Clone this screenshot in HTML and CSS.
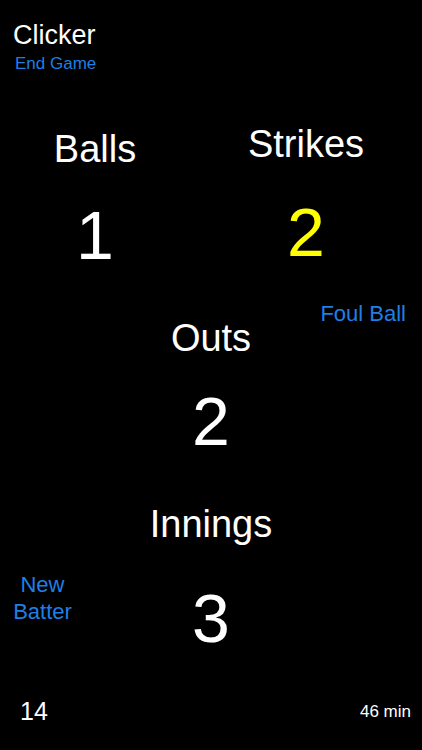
FILE: index.html
```html
<!DOCTYPE html>
<html lang="en">
<head>
<meta charset="utf-8">
<title>Clicker</title>
<link rel="stylesheet" href="styles.css">
</head>
<body>
<div class="screen">
  <header class="header">
    <div class="title">Clicker</div>
    <div class="link end-game">End Game</div>
  </header>

  <section class="count-row">
    <div class="count balls">
      <div class="label">Balls</div>
      <div class="number">1</div>
    </div>
    <div class="count strikes">
      <div class="label">Strikes</div>
      <div class="number yellow">2</div>
    </div>
  </section>

  <section class="outs">
    <div class="center-col outs-col">
      <div class="label">Outs</div>
      <div class="number outs-number">2</div>
    </div>
    <div class="link foul">Foul Ball</div>
  </section>

  <section class="innings">
    <div class="label innings-label">Innings</div>
    <div class="innings-row">
      <div class="link new-batter">New<br>Batter</div>
      <div class="number innings-number">3</div>
    </div>
  </section>

  <footer class="footer">
    <div class="batters">14</div>
    <div class="time">46 min</div>
  </footer>
</div>
</body>
</html>
```

FILE: styles.css
```css
html, body {
  margin: 0;
  padding: 0;
  background: #000;
}

.screen {
  width: 422px;
  height: 750px;
  background: #000;
  color: #fff;
  font-family: "Liberation Sans", Arial, "Helvetica Neue", sans-serif;
  display: flex;
  flex-direction: column;
  overflow: hidden;
}

.link {
  color: #1f7fe5;
}

.header {
  padding: 22px 0 0 13px;
}

.title {
  font-size: 27px;
  line-height: 1;
}

.end-game {
  font-size: 17px;
  line-height: 1;
  margin-top: 5.5px;
  padding-left: 2px;
}

.label {
  font-size: 38px;
  line-height: 1;
  text-align: center;
}

.number {
  font-size: 68px;
  line-height: 1;
  text-align: center;
}

.yellow {
  color: #ffff00;
}

.count-row {
  margin-top: 53px;
  display: grid;
  grid-template-columns: 190px 1fr;
}

.count {
  display: flex;
  flex-direction: column;
  align-items: center;
}

.balls {
  padding-top: 5px;
  gap: 33px;
}

.strikes {
  gap: 35px;
}

.outs {
  margin-top: 34.6px;
  display: grid;
  grid-template-columns: 1fr auto 1fr;
}

.outs-col {
  grid-column: 2;
  grid-row: 1;
  padding-top: 16.4px;
  display: flex;
  flex-direction: column;
  align-items: center;
  gap: 29.6px;
}

.foul {
  grid-column: 3;
  grid-row: 1;
  justify-self: end;
  align-self: start;
  font-size: 22px;
  line-height: 1;
  padding-right: 16px;
}

.innings {
  margin-top: 50.4px;
}

.innings-row {
  display: grid;
  grid-template-columns: 1fr auto 1fr;
}

.new-batter {
  grid-column: 1;
  justify-self: start;
  align-self: start;
  width: 85px;
  text-align: center;
  font-size: 22px;
  line-height: 27px;
  margin-top: 28px;
}

.innings-number {
  grid-column: 2;
  margin-top: 40.6px;
}

.footer {
  margin-top: 47.4px;
  display: flex;
  justify-content: space-between;
  align-items: flex-start;
  padding: 0 11px 0 20px;
}

.batters {
  font-size: 25px;
  line-height: 1;
}

.time {
  font-size: 17px;
  line-height: 1;
  margin-top: 3.8px;
}
```
